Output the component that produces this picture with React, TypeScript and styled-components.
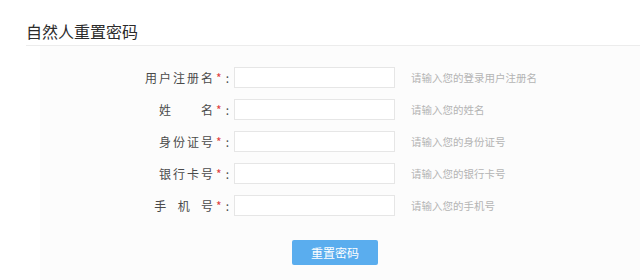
import * as React from 'react'
import styled, { createGlobalStyle } from 'styled-components'

const GlobalStyle = createGlobalStyle`
  html, body {
    margin: 0;
    padding: 0;
    background: #fff;
  }
  body {
    font-family: 'Noto Sans CJK SC', 'Microsoft YaHei', sans-serif;
    color: #333;
  }
`

const Page = styled.div`
  width: 640px;
  height: 280px;
  overflow: hidden;
  background: #fff;
`

const Header = styled.div`
  margin-left: 26px;
  padding: 20px 0 3px;
  border-bottom: 1px solid #ececec;
`

const Title = styled.h2`
  margin: 0;
  font-size: 16px;
  font-weight: normal;
  line-height: 22px;
  color: #2b2b2b;
`

const Panel = styled.div`
  margin-left: 40px;
  background: #fcfcfc;
  padding: 21px 0 40px;
  display: flex;
  flex-direction: column;
  gap: 12px;
`

const Row = styled.div`
  display: grid;
  grid-template-columns: 194px 161px auto;
  align-items: center;
  height: 20px;
`

const Label = styled.label`
  justify-self: end;
  padding-right: 3px;
  font-size: 12px;
  letter-spacing: 2px;
  color: #4a4a4a;
  white-space: pre;
`

const Star = styled.span`
  margin: 0 2px 0 1px;
  color: #e04040;
`

const Input = styled.input`
  box-sizing: border-box;
  width: 161px;
  height: 21px;
  border: 1px solid #e6e6e6;
  background: #fff;
  outline: none;
  padding: 0 6px;
  font-size: 12px;
`

const Hint = styled.span`
  padding-left: 16px;
  font-size: 10.5px;
  color: #b4b4b4;
`

const SubmitRow = styled.div`
  padding: 12px 0 0 252px;
`

const Button = styled.button`
  width: 86px;
  height: 25px;
  border: none;
  border-radius: 2px;
  background: #5aadee;
  color: #fff;
  font-family: inherit;
  font-size: 12px;
  cursor: pointer;
`

const fields = [
  { label: '用户注册名', hint: '请输入您的登录用户注册名' },
  { label: '姓　　名', hint: '请输入您的姓名' },
  { label: '身份证号', hint: '请输入您的身份证号' },
  { label: '银行卡号', hint: '请输入您的银行卡号' },
  { label: '手  机  号', hint: '请输入您的手机号' },
]

const App: React.FC = () => {
  return (
    <Page>
      <GlobalStyle />
      <Header>
        <Title>自然人重置密码</Title>
      </Header>
      <Panel>
        {fields.map((f, i) => (
          <Row key={i}>
            <Label>
              {f.label}
              <Star>*</Star>:
            </Label>
            <Input type="text" />
            <Hint>{f.hint}</Hint>
          </Row>
        ))}
        <SubmitRow>
          <Button>重置密码</Button>
        </SubmitRow>
      </Panel>
    </Page>
  )
}

export default App
